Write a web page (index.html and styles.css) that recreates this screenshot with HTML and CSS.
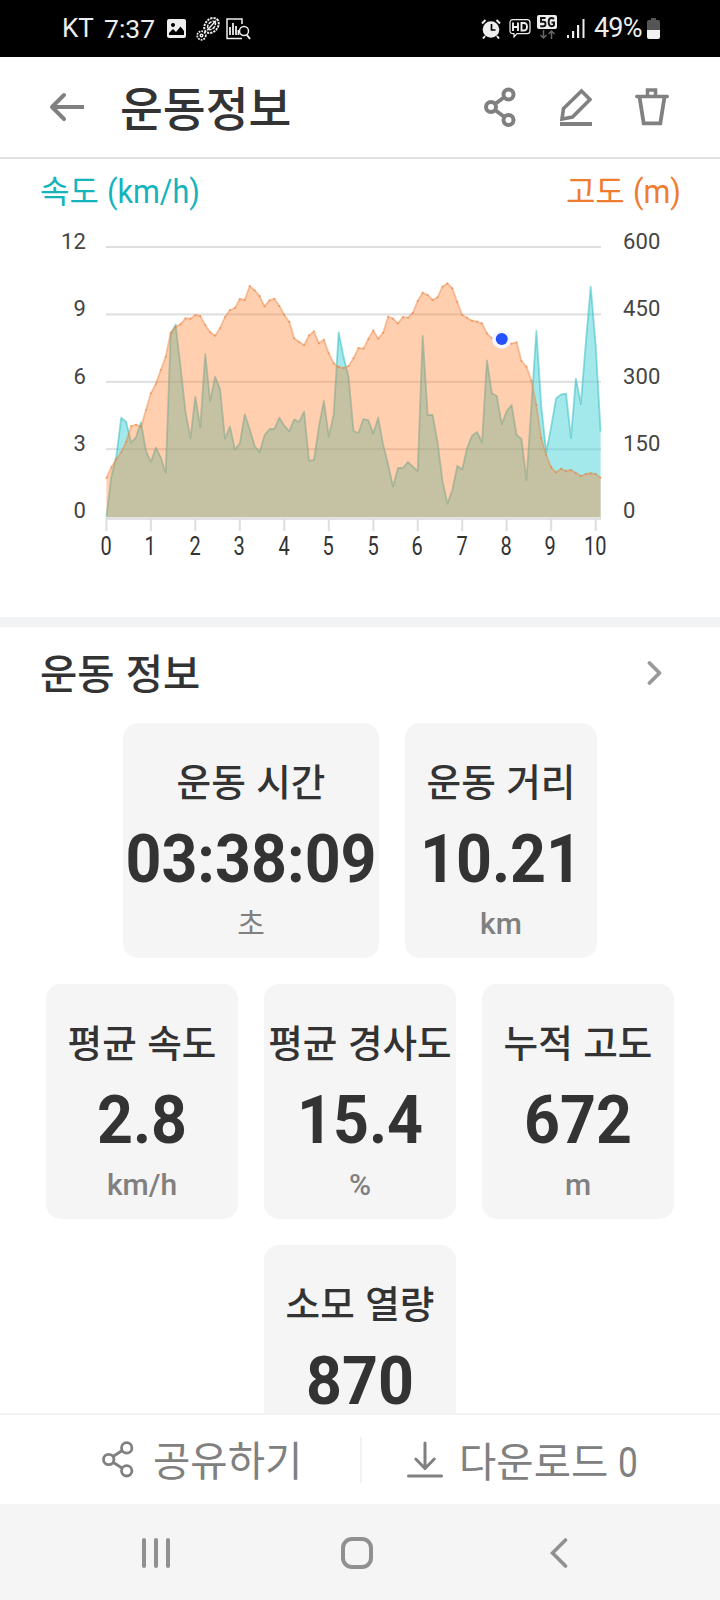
FILE: index.html
```html
<!DOCTYPE html>
<html lang="ko">
<head>
<meta charset="utf-8">
<title>운동정보</title>
<link rel="stylesheet" href="styles.css">
</head>
<body>
<div class="screen">
  <div class="status">
    <span class="carrier">KT</span>
    <span class="clock">7:37</span>
    <svg class="s-img" width="19" height="19" viewBox="0 0 19 19"><path fill="#eee" fill-rule="evenodd" d="M2 0h15a2 2 0 0 1 2 2v15a2 2 0 0 1-2 2H2a2 2 0 0 1-2-2V2a2 2 0 0 1 2-2ZM2 16h15v-4l-3.500-4.500-4.500 5.500-3-3-4 4ZM6 4a2 2 0 1 0 .01 0Z"/></svg>
    <svg class="s-gear" width="24" height="24" viewBox="0 0 24 24" fill="none" stroke="#eee"><circle cx="5.500" cy="18.500" r="4.300" stroke-width="1.800" stroke-dasharray="1.800 1"/><circle cx="5.500" cy="18.500" r="1.300" stroke-width="1.500"/><g transform="rotate(-48 15.500 8.500)"><ellipse cx="15.500" cy="8.500" rx="8.300" ry="6.300" stroke-width="2" stroke-dasharray="2.200 1"/><ellipse cx="15.500" cy="8.500" rx="4.800" ry="3.200" stroke-width="1.600" stroke-dasharray="3.500 1"/><path d="M9 8.500h13" stroke-width="1.400"/></g></svg>
    <svg class="s-report" width="25" height="22" viewBox="0 0 25 22" fill="none" stroke="#eee" stroke-width="1.500"><path d="M16 6V1H1v19.500h15"/><path d="M4 17V9M7 17V5M10 17V8M12.500 17v-5" stroke-width="1.800"/><circle cx="18" cy="13" r="4.500"/><path d="m21 17 3 4" stroke-width="2"/></svg>
    <span class="grow"></span>
    <svg class="s-alarm" width="20" height="20" viewBox="0 0 20 20"><circle cx="10" cy="10.500" r="8.300" fill="#eee"/><path d="M1 4.500 4.500 1M15.500 1 19 4.500M4 17l-2 2.500M16 17l2 2.500" stroke="#eee" stroke-width="2"/><path d="M10.500 5v6h4" fill="none" stroke="#000" stroke-width="1.700"/></svg>
    <svg class="s-hd" width="22" height="19" viewBox="0 0 22 19" fill="none" stroke="#eee" stroke-width="1.200"><path d="M4 .7h14q3 0 3 3v8q0 3-3 3H8L5 18v-3.300H4q-3 0-3-3v-8q0-3 3-3Z"/><path d="M4 3.500v8.500M9 3.500v8.500M4 8h5M12.500 4v7.500h2q3.500 0 3.500-3.800T14.500 4Z" stroke-width="1.900"/></svg>
    <svg class="s-5g" width="20" height="25" viewBox="0 0 20 25"><rect width="20" height="14" rx="2" fill="#eee"/><path d="M8.500 3H4v3.700h2.500q2 0 2 2.200t-2 2.300H3.200M17 4q-1-1-2.500-1-2.800 0-2.800 4.100t2.800 4.100q2 0 2.500-1V7.500h-2.500" fill="none" stroke="#111" stroke-width="1.900"/><path d="M6.500 15v8m-3-3 3 3 3-3M14.500 24v-8m-3 3 3-3 3 3" fill="none" stroke="#666" stroke-width="1.500"/></svg>
    <svg class="s-signal" width="18" height="20" viewBox="0 0 18 20" fill="#eee"><path d="M0 16h2v3H0zM5 12h2.200v7H5zM10 6h2.200v13H10zM15.500 0h2v19h-2z"/></svg>
    <span class="percent">49%</span>
    <svg class="s-batt" width="13" height="21" viewBox="0 0 13 21"><path d="M4 0h5v2h2q2 0 2 2v8H0V4q0-2 2-2h2Z" fill="#555"/><path d="M0 12h13v7q0 2-2 2H2q-2 0-2-2Z" fill="#f2f2f2"/></svg>
  </div>

  <header class="header">
    <svg class="back" width="36" height="30" viewBox="0 0 36 30" fill="none" stroke="#808080" stroke-width="4"><path d="M3 15h32"/><path d="m15 3L3 15l12 12" stroke-linecap="round" stroke-linejoin="round"/></svg>
    <h1 class="title">운동정보</h1>
    <span class="grow"></span>
    <svg class="h-share" width="32" height="40" viewBox="0 0 32 40" fill="none" stroke="#808080" stroke-width="4"><circle cx="7" cy="20" r="5"/><circle cx="24.500" cy="7.500" r="5"/><circle cx="24.500" cy="33" r="5"/><path d="m11 17 9.500-7M11 23l9.500 7"/></svg>
    <svg class="h-edit" width="32" height="38" viewBox="0 0 32 38" fill="none" stroke="#808080"><path d="M21.500 3 30 11.500 12.500 29 2 31l1.500-10.500Z" stroke-width="3.600"/><path d="M0 36h32" stroke-width="4"/></svg>
    <svg class="h-trash" width="34" height="38" viewBox="0 0 34 38" fill="none" stroke="#808080"><path d="M1.800 8.500h30.400" stroke-width="3.600" stroke-linecap="round"/><path d="M12.500 8V2h8v6" stroke-width="3.500"/><path d="m4.500 9 4.200 26.300h16.600L29.500 9" stroke-width="3.800"/></svg>
  </header>

  <section class="chart">
    <div class="legend"><span class="speed">속도 <span class="narrow">(km/h)</span></span><span class="alt">고도 <span class="narrow">(m)</span></span></div>
    <div class="plot-row">
      <div class="axis left"><span>12</span><span>9</span><span>6</span><span>3</span><span>0</span></div>
      <svg class="plot" id="plot" width="520" height="310" viewBox="0 0 520 310"></svg>
      <div class="axis right"><span>600</span><span>450</span><span>300</span><span>150</span><span>0</span></div>
    </div>
    <div class="x-axis"><span>0</span><span>1</span><span>2</span><span>3</span><span>4</span><span>5</span><span>5</span><span>6</span><span>7</span><span>8</span><span>9</span><span>10</span></div>
  </section>

  <section class="info">
    <div class="info-head"><h2 class="info-title">운동 정보</h2>
      <svg width="16" height="26" viewBox="0 0 16 26" fill="none" stroke="#999" stroke-width="3.800" stroke-linecap="round" stroke-linejoin="round"><path d="m2.500 3 10 10-10 10"/></svg>
    </div>
    <div class="cards">
      <div class="row">
        <div class="card wide"><div class="label">운동 시간</div><div class="value">03:38:09</div><div class="unit cho">초</div></div>
        <div class="card"><div class="label">운동 거리</div><div class="value">10.21</div><div class="unit">km</div></div>
      </div>
      <div class="row">
        <div class="card"><div class="label">평균 속도</div><div class="value">2.8</div><div class="unit">km/h</div></div>
        <div class="card"><div class="label">평균 경사도</div><div class="value">15.4</div><div class="unit">%</div></div>
        <div class="card"><div class="label">누적 고도</div><div class="value">672</div><div class="unit">m</div></div>
      </div>
      <div class="row">
        <div class="card"><div class="label">소모 열량</div><div class="value">870</div></div>
      </div>
    </div>
  </section>

  <div class="actions">
    <div class="action share">
      <svg width="32" height="37" viewBox="0 0 32 37" fill="none" stroke="#808080" stroke-width="2.800"><circle cx="6.700" cy="18.500" r="5.200"/><circle cx="24.700" cy="6.900" r="5.200"/><circle cx="24.700" cy="29.800" r="5.200"/><path d="m11 15.500 9.300-6M11 21.300l9.300 6"/></svg>
      <span class="action-text">공유하기</span>
    </div>
    <div class="divider"></div>
    <div class="action download">
      <svg width="36" height="37" viewBox="0 0 36 37" fill="none" stroke="#808080" stroke-width="3" stroke-linecap="round" stroke-linejoin="round"><path d="M18 2v25M8.800 18 18 27.500 27.300 18M1.500 35h33"/></svg>
      <span class="action-text">다운로드 <span class="count">0</span></span>
    </div>
  </div>

  <nav class="nav">
    <svg width="28" height="30" viewBox="0 0 28 30" stroke="#909090" stroke-width="4" stroke-linecap="round"><path d="M2 2v26M14 2v26M26 2v26"/></svg>
    <svg class="home" width="32" height="32" viewBox="0 0 32 32" fill="none" stroke="#909090" stroke-width="4"><rect x="2" y="2" width="28" height="28" rx="9"/></svg>
    <svg class="nav-back" width="18" height="30" viewBox="0 0 18 30" fill="none" stroke="#909090" stroke-width="3.600" stroke-linecap="round"><path d="M15.500 2 2.500 15l13 13"/></svg>
  </nav>
</div>
<script src="chart.js"></script>
</body>
</html>
```
FILE: styles.css
```css
* { box-sizing: border-box; }
body { margin: 0; background: #fff; color: #333; font-family: Roboto, "Noto Sans CJK KR", sans-serif; }
h1, h2 { margin: 0; font-weight: 500; }
svg { display: block; flex: none; }
.grow { flex: 1; }
.screen { width: 720px; height: 1600px; overflow: hidden; display: flex; flex-direction: column; }

.status { flex: none; height: 57px; background: #000; color: #eee; display: flex; align-items: center; padding: 0 60px 0 62px; font-size: 27px; line-height: 57px; white-space: nowrap; }
.carrier { width: 42px; font-size: 26px; }
.clock { width: 63px; font-size: 26.500px; }
.s-gear { margin-left: 10px; }
.s-report { margin-left: 6px; }
.s-hd { margin-left: 8px; }
.s-5g { margin-left: 6px; margin-top: -2px; }
.s-signal { margin-left: 10px; }
.percent { margin-left: 9px; width: 50px; font-size: 27px; letter-spacing: -.8px; }
.s-batt { margin-left: 3px; }

.header { flex: none; height: 102px; border-bottom: 2px solid #e1e1e1; display: flex; align-items: center; padding: 0 51px 0 49px; }
.title { margin-left: 35px; font-family: "Noto Sans CJK KR", sans-serif; font-size: 46.600px; line-height: 70px; margin-top: -3px; }
.h-edit { margin-left: 44px; }
.h-trash { margin-left: 43px; }

.chart { flex: none; height: 458px; }
.legend { display: flex; justify-content: space-between; padding: 9px 40px 0 40px; font-size: 32px; line-height: 46px; height: 55px; white-space: nowrap; }
.narrow { display: inline-block; font-size: 34px; transform: scaleX(.9); transform-origin: left; }
.alt .narrow { margin-right: -6px; }
.speed { color: #14b4bd; }
.alt { color: #ef7d31; }
.plot-row { display: flex; height: 310px; margin-top: 17px; }
.axis { display: flex; flex-direction: column; font-size: 22px; line-height: 30px; color: #444; letter-spacing: .1px; margin-top: -4px; }
.axis span { height: 67.300px; flex: none; }
.left { width: 86px; text-align: right; }
.right { padding-left: 17px; }
.x-axis { display: flex; margin: -9px 0 0 84px; font-size: 25px; line-height: 30px; }
.x-axis span { width: 44.450px; flex: none; text-align: center; transform: scaleX(.8); }

.info { flex: none; height: 796px; border-top: 10px solid #f1f2f4; overflow: hidden; }
.info-head { display: flex; justify-content: space-between; align-items: center; height: 96px; padding: 0 57px 4px 40px; }
.info-title { font-family: "Noto Sans CJK KR", sans-serif; font-size: 40.500px; line-height: 58px; margin-top: -3px; }
.cards { display: flex; flex-direction: column; gap: 26px; }
.row { display: flex; justify-content: center; gap: 26px; }
.card { width: 192px; height: 235px; border-radius: 15px; background: #f5f5f5; text-align: center; white-space: nowrap; padding-top: 29px; }
.wide { width: 256px; }
.label { font-family: "Noto Sans CJK KR", sans-serif; font-weight: 500; font-size: 37.600px; line-height: 56px; }
.value { font-weight: 700; font-size: 66px; line-height: 60px; margin: 21.500px -10px 0; transform: scaleX(.95); }
.unit { font-weight: 500; font-size: 30px; line-height: 40px; color: #808080; margin-top: 14.500px; }
.cho { font-weight: 400; }

.actions { flex: none; height: 91px; border-top: 2px solid #f2f2f2; display: flex; align-items: center; color: #808080; font-size: 40.600px; line-height: 60px; white-space: nowrap; }
.action { display: flex; align-items: center; }
.action-text { margin-top: 5px; }
.count { display: inline-block; font-size: 43px; transform: scaleX(.82); transform-origin: left; }
.share { width: 360px; padding-left: 102px; gap: 19px; }
.divider { width: 2px; height: 46px; background: #f2f2f2; }
.download { padding-left: 45px; gap: 16px; }

.nav { flex: none; height: 96px; background: #f5f5f5; display: flex; align-items: center; padding: 2px 0 0 142px; }
.home { margin-left: 171px; }
.nav-back { margin-left: 177px; }
```
FILE: chart.js
```js
// Sample heights, in thirds of a pixel from the top of the plot.
const altitude = [774,742,718,697,665,618,614,620,570,520,492,450,410,338,320,313,295,296,285,288,315,337,347,324,291,270,264,237,240,198,211,228,259,241,236,258,285,305,355,366,375,346,334,370,359,400,430,441,444,438,415,384,386,357,331,356,338,290,296,310,291,293,279,242,218,225,240,232,200,190,205,246,285,293,302,305,310,340,355,355,357,365,371,367,423,440,482,555,655,705,742,757,746,753,750,759,768,762,760,762,773];
const speed = [890,770,710,593,606,668,652,607,692,726,683,712,758,345,314,440,575,655,530,622,402,544,470,508,656,620,688,670,583,628,678,697,646,627,627,593,617,634,598,606,575,722,720,620,543,650,583,337,412,470,633,639,597,601,640,593,675,733,800,744,744,726,740,753,347,585,585,665,782,851,810,738,748,683,647,636,668,421,520,528,613,573,555,645,657,780,560,333,560,697,620,535,523,521,654,476,552,370,200,375,635];
const X0 = 20.4, STEP = 4.942, TOP = 11, BASE = 286;
const px = i => X0 + i * STEP;
const py = v => v / 3 - TOP;
const pts = a => a.map((v, i) => px(i).toFixed(2) + ',' + py(v).toFixed(2)).join(' ');
const area = (a, fill) => `<polygon points="${px(0)},${BASE} ${pts(a)} ${px(100)},${BASE}" fill="${fill}"/>`;
const line = (a, c) => `<polyline points="${pts(a)}" fill="none" stroke="${c}" stroke-width="1.8" stroke-linejoin="round"/>`;
let s = '';
for (let k = 0; k < 4; k++) s += `<rect x="20" y="${15 + k * 67.4}" width="495" height="2" fill="#dedede"/>`;
s += `<rect x="20" y="286" width="495" height="3" fill="#e2e2e2"/>`;
for (let k = 0; k < 12; k++) s += `<rect x="${px(k * 9) - 1}" y="287" width="2" height="13" fill="#dedede"/>`;
s += area(speed, 'rgba(71,211,216,.5)') + line(speed, 'rgba(40,185,192,.5)');
s += area(altitude, 'rgba(255,125,41,.37)') + line(altitude, 'rgba(240,130,60,.45)');
altitude.forEach((v, i) => { s += `<circle cx="${px(i)}" cy="${py(v)}" r="1" fill="rgba(225,120,50,.5)"/>`; });
s += `<circle cx="${px(80)}" cy="${py(357)}" r="9.700" fill="#f4f7ff"/><circle cx="${px(80)}" cy="${py(357)}" r="6" fill="#2550fb"/>`;
document.getElementById('plot').innerHTML = s;
```
